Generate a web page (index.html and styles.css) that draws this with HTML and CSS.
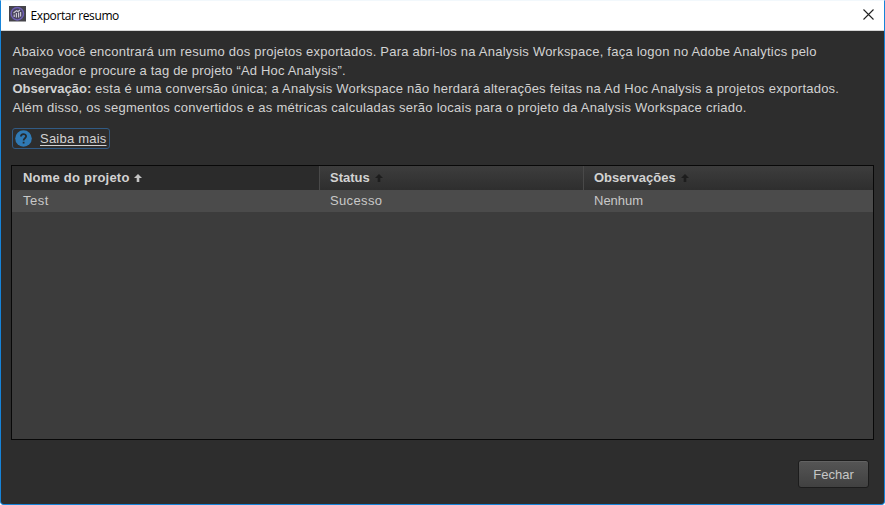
FILE: index.html
```html
<!DOCTYPE html>
<html lang="pt-BR">
<head>
<meta charset="utf-8">
<title>Exportar resumo</title>
<link rel="stylesheet" href="styles.css">
</head>
<body>
<div class="window">
  <header class="titlebar">
    <svg class="app-icon" width="17" height="16" viewBox="0 0 17 16"><rect width="17" height="15.5" fill="#45444a"/><circle cx="8.3" cy="7.7" r="6.2" fill="#48425c" stroke="#6f60b4" stroke-width="1.5"/><path d="M5.200 11V8.500M7.400 11.500V7M9.600 11.500V6.500M11.600 10.500V6M4.500 7 7.500 4.800 9 5.500 11 4" fill="none" stroke="#c9c7d0" stroke-width="1.2"/></svg>
    <span class="title">Exportar resumo</span>
    <svg class="close" width="11" height="11" viewBox="0 0 11 11"><path d="M.5.5l10 10M10.500.5l-10 10" stroke="#222" stroke-width="1.1"/></svg>
  </header>
  <main class="content">
    <div class="intro">
      <p class="line l1">Abaixo você encontrará um resumo dos projetos exportados. Para abri-los na Analysis Workspace, faça logon no Adobe Analytics pelo</p>
      <p class="line l2">navegador e procure a tag de projeto “Ad Hoc Analysis”.</p>
      <p class="line l3"><b>Observação:</b> esta é uma conversão única; a Analysis Workspace não herdará alterações feitas na Ad Hoc Analysis a projetos exportados.</p>
      <p class="line l4">Além disso, os segmentos convertidos e as métricas calculadas serão locais para o projeto da Analysis Workspace criado.</p>
    </div>
    <a class="learn"><svg width="17" height="17" viewBox="0 0 17 17"><circle cx="8.500" cy="8.500" r="8.300" fill="#2f7ab5"/><path d="M5.900 6.600C5.900 3.200 11.100 3.300 11.100 6.300 11.100 8.200 8.600 8.200 8.600 10.400M8.600 11.700v1.700" fill="none" stroke="#252b30" stroke-width="1.800"/></svg><span>Saiba mais</span></a>
    <div class="table">
      <div class="row head">
        <div class="cell sorted">Nome do projeto<svg class="arrow" width="8" height="8" viewBox="0 0 8 8"><path d="M4 0 8 4H5.300V8H2.700V4H0z"/></svg></div>
        <div class="cell">Status<svg class="arrow" width="8" height="8" viewBox="0 0 8 8"><path d="M4 0 8 4H5.300V8H2.700V4H0z"/></svg></div>
        <div class="cell">Observações<svg class="arrow" width="8" height="8" viewBox="0 0 8 8"><path d="M4 0 8 4H5.300V8H2.700V4H0z"/></svg></div>
      </div>
      <div class="row data">
        <div class="cell name">Test</div>
        <div class="cell status">Sucesso</div>
        <div class="cell">Nenhum</div>
      </div>
    </div>
    <div class="footer"><button class="button">Fechar</button></div>
  </main>
</div>
</body>
</html>
```

FILE: styles.css
```css
* { box-sizing: border-box; }
body { margin: 0; background: #fff; font: 13px/18px "Liberation Sans", Arial, sans-serif; color: #d2d2d2; overflow: hidden; }
.window { width: 885px; height: 505px; display: flex; flex-direction: column; border: 1px solid #1683d8; border-top-color: #f2f8fc; border-radius: 0 0 4px 4px; background: #2d2d2d; overflow: hidden; }
.titlebar { height: 30px; flex: none; display: flex; align-items: center; padding: 0 10px 0 8px; background: #fff; border-bottom: 1px solid #d5d5d5; color: #000; }
.app-icon { margin-top: -3px; }
.title { margin-left: 4.5px; font: 12px/16px "Open Sans", sans-serif; letter-spacing: -0.4px; }
.close { margin-left: auto; margin-top: -2px; }
.content { flex: 1; display: flex; flex-direction: column; padding: 12px 10px 0; }
.intro { height: 74px; padding-left: 1.5px; }
.line { margin: 0; height: 18.6px; line-height: 18.6px; white-space: nowrap; }
.l1 { letter-spacing: 0.225px; }
.l2 { letter-spacing: 0.175px; }
.l3 { letter-spacing: 0.235px; }
.l3 b { letter-spacing: 0; }
.l4 { letter-spacing: 0.245px; }
.learn { width: 98px; height: 21px; margin: 11px 0 0 1px; display: flex; align-items: center; padding-left: 2px; border: 1px solid #315b85; border-radius: 3px; }
.learn span { margin-left: 8px; letter-spacing: 0.22px; text-decoration: underline; text-underline-offset: 2px; white-space: nowrap; }
.table { height: 275px; flex: none; margin-top: 16px; border: 1px solid #080808; background: #3c3c3c; }
.row { display: grid; grid-template-columns: 307px 264px 1fr; }
.head { height: 24px; font-weight: bold; line-height: 23px; background: linear-gradient(#3d3d3d, #2e2e2e); }
.head .cell + .cell { border-left: 1px solid #494949; padding-left: 10px; }
.cell { padding-left: 11px; white-space: nowrap; }
.sorted { background: #2b2b2b; letter-spacing: 0.22px; }
.arrow { margin-left: 5px; fill: #1d1d1d; }
.sorted .arrow { margin-left: 4px; fill: #c4c4c4; }
.data { height: 22px; line-height: 22px; background: #4b4b4b; color: #c8c8c8; }
.name { letter-spacing: 0.5px; }
.status { letter-spacing: 0.35px; }
.footer { display: flex; justify-content: flex-end; padding: 20px 5px 0 0; }
.button { width: 71px; height: 28px; padding: 0; border: 1px solid #1c1c1c; border-radius: 3px; background: linear-gradient(#555, #414141); box-shadow: inset 0 1px #626262; color: #c7c7c7; font: 13px "Liberation Sans", Arial, sans-serif; }
```
